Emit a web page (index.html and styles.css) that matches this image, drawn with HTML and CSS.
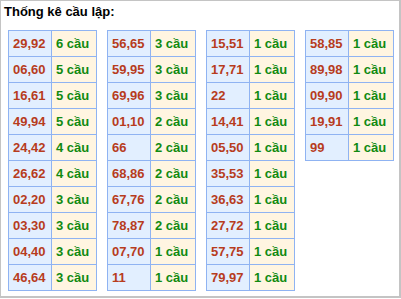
FILE: index.html
```html
<!DOCTYPE html>
<html>
<head>
<meta charset="utf-8">
<link rel="stylesheet" href="styles.css">
</head>
<body>
<div class="box">
  <div class="title">Thống kê cầu lập:</div>
  <div class="tables">
    <table class="t">
      <tr><td class="n">29,92</td><td class="c">6 cầu</td></tr>
      <tr><td class="n">06,60</td><td class="c">5 cầu</td></tr>
      <tr><td class="n">16,61</td><td class="c">5 cầu</td></tr>
      <tr><td class="n">49,94</td><td class="c">5 cầu</td></tr>
      <tr><td class="n">24,42</td><td class="c">4 cầu</td></tr>
      <tr><td class="n">26,62</td><td class="c">4 cầu</td></tr>
      <tr><td class="n">02,20</td><td class="c">3 cầu</td></tr>
      <tr><td class="n">03,30</td><td class="c">3 cầu</td></tr>
      <tr><td class="n">04,40</td><td class="c">3 cầu</td></tr>
      <tr><td class="n">46,64</td><td class="c">3 cầu</td></tr>
    </table>
    <table class="t">
      <tr><td class="n">56,65</td><td class="c">3 cầu</td></tr>
      <tr><td class="n">59,95</td><td class="c">3 cầu</td></tr>
      <tr><td class="n">69,96</td><td class="c">3 cầu</td></tr>
      <tr><td class="n">01,10</td><td class="c">2 cầu</td></tr>
      <tr><td class="n">66</td><td class="c">2 cầu</td></tr>
      <tr><td class="n">68,86</td><td class="c">2 cầu</td></tr>
      <tr><td class="n">67,76</td><td class="c">2 cầu</td></tr>
      <tr><td class="n">78,87</td><td class="c">2 cầu</td></tr>
      <tr><td class="n">07,70</td><td class="c">1 cầu</td></tr>
      <tr><td class="n">11</td><td class="c">1 cầu</td></tr>
    </table>
    <table class="t">
      <tr><td class="n">15,51</td><td class="c">1 cầu</td></tr>
      <tr><td class="n">17,71</td><td class="c">1 cầu</td></tr>
      <tr><td class="n">22</td><td class="c">1 cầu</td></tr>
      <tr><td class="n">14,41</td><td class="c">1 cầu</td></tr>
      <tr><td class="n">05,50</td><td class="c">1 cầu</td></tr>
      <tr><td class="n">35,53</td><td class="c">1 cầu</td></tr>
      <tr><td class="n">36,63</td><td class="c">1 cầu</td></tr>
      <tr><td class="n">27,72</td><td class="c">1 cầu</td></tr>
      <tr><td class="n">57,75</td><td class="c">1 cầu</td></tr>
      <tr><td class="n">79,97</td><td class="c">1 cầu</td></tr>
    </table>
    <table class="t">
      <tr><td class="n">58,85</td><td class="c">1 cầu</td></tr>
      <tr><td class="n">89,98</td><td class="c">1 cầu</td></tr>
      <tr><td class="n">09,90</td><td class="c">1 cầu</td></tr>
      <tr><td class="n">19,91</td><td class="c">1 cầu</td></tr>
      <tr><td class="n">99</td><td class="c">1 cầu</td></tr>
    </table>
  </div>
</div>
</body>
</html>
```
FILE: styles.css
```css
html, body {
  margin: 0;
  padding: 0;
  background: #ffffff;
}
.box {
  box-sizing: border-box;
  width: 401px;
  height: 298px;
  border: 1px solid #c4c4c4;
  border-width: 1px 2px 2px 1px;
  font-family: "Liberation Sans", Arial, sans-serif;
}
.title {
  font-weight: bold;
  font-size: 13px;
  line-height: 16px;
  color: #000;
  padding: 3px 3px 0;
  height: 26px;
}
.tables {
  display: flex;
  align-items: flex-start;
  gap: 10px;
  padding-left: 7px;
}
.t {
  border-collapse: collapse;
  width: 89px;
  table-layout: fixed;
}
.t td {
  border: 1px solid #8fb3f2;
  height: 25px;
  padding: 0 0 0 4px;
  font-size: 13px;
  font-weight: bold;
  line-height: 16px;
  vertical-align: middle;
  white-space: nowrap;
}
.t td.n {
  width: 38px;
  background: #e2efff;
  color: #b73c1d;
}
.t td.c {
  background: #fff5e1;
  color: #118a11;
}
```
